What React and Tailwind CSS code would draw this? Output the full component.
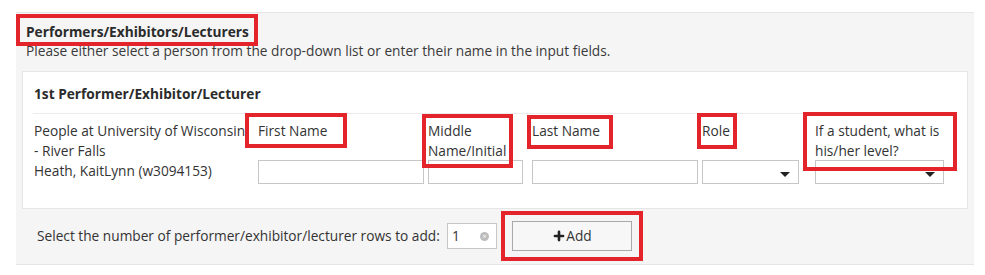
import { Plus } from 'lucide-react';

const font = { fontFamily: '"Open Sans", "Liberation Sans", sans-serif' };

// red annotation boxes drawn over the screenshot
const marks = [
  'left-[16px] top-[14px] w-[242px] h-[32px]',
  'left-[245px] top-[113px] w-[102px] h-[35px]',
  'left-[422px] top-[114px] w-[91px] h-[54px]',
  'left-[527px] top-[115px] w-[86px] h-[34px]',
  'left-[697px] top-[113px] w-[40px] h-[36px]',
  'left-[803px] top-[112px] w-[154px] h-[59px]',
  'left-[501px] top-[211px] w-[142px] h-[50px]',
];

function Caret() {
  return (
    <span className="absolute right-[8px] top-[11px] w-0 h-0 border-l-[5px] border-r-[5px] border-t-[5px] border-l-transparent border-r-transparent border-t-[#222]" />
  );
}

function Field({ label, width, ml, select }) {
  return (
    <div className={`flex flex-col ${width} ${ml}`}>
      <div className="h-[39px] leading-[20px]">{label}</div>
      <div className="relative h-[24px] border border-[#c6c6c6] bg-white">
        {select && <Caret />}
      </div>
    </div>
  );
}

export default function App() {
  return (
    <div className="relative w-[985px] h-[275px] pt-[12px] bg-white text-[13.7px] text-[#333]" style={font}>
      <div className="ml-[16px] w-[958px] bg-[#f5f5f5] border-t border-b border-[#e4e4e4] pt-[10px] pb-[13px]">
        <div className="pl-[10px] font-bold leading-[18px] text-[#2b2b2b]">Performers/Exhibitors/Lecturers</div>
        <div className="pl-[10px] mt-[1px] leading-[18px] text-[#3a3a3a]">
          Please either select a person from the drop-down list or enter their name in the input fields.
        </div>

        <div className="mx-[6px] mt-[11px] h-[138px] bg-white border border-[#e6e6e6]">
          <div className="mx-[10px] pt-[13px] pb-[10px] border-b border-[#ececec] font-bold leading-[18px] pl-[1px] text-[#2b2b2b]">
            1st Performer/Exhibitor/Lecturer
          </div>
          <div className="flex mt-[7px] pl-[11px]">
            <div className="w-[214px] leading-[20px] mr-[10px] whitespace-nowrap">
              People at University of Wisconsin
              <div>- River Falls</div>
              <div>Heath, KaitLynn (w3094153)</div>
            </div>
            <Field label="First Name" width="w-[166px]" ml="ml-0" />
            <Field label="Middle Name/Initial" width="w-[95px]" ml="ml-[4px]" />
            <Field label="Last Name" width="w-[166px]" ml="ml-[9px]" />
            <Field label="Role" width="w-[97px]" ml="ml-[4px]" select />
            <Field label="If a student, what is his/her level?" width="w-[129px]" ml="ml-[16px]" select />
          </div>
        </div>

        <div className="flex items-center mt-[12px] pl-[21px] h-[30px]">
          <span className="w-[406px] whitespace-nowrap">Select the number of performer/exhibitor/lecturer rows to add:</span>
          <div className="relative ml-[4px] w-[50px] h-[26px] border border-[#c6c6c6] bg-white flex items-center pl-[4px]">
            1
            <span className="absolute right-[7px] top-[8px] w-[9px] h-[9px] rounded-full bg-[#bdbdbd] flex items-center justify-center text-white text-[7px] leading-none">
              ×
            </span>
          </div>
          <button className="ml-[15px] w-[120px] h-[30px] border border-[#a9a9a9] bg-[#f7f7f7] flex items-center justify-center text-[#333]">
            <Plus size={14} strokeWidth={4.5} className="text-[#222]" />
            <span className="leading-none">Add</span>
          </button>
        </div>
      </div>

      {marks.map((m) => (
        <div key={m} className={`absolute ${m} border-[4px] border-[#e3242b] pointer-events-none`} />
      ))}
    </div>
  );
}
